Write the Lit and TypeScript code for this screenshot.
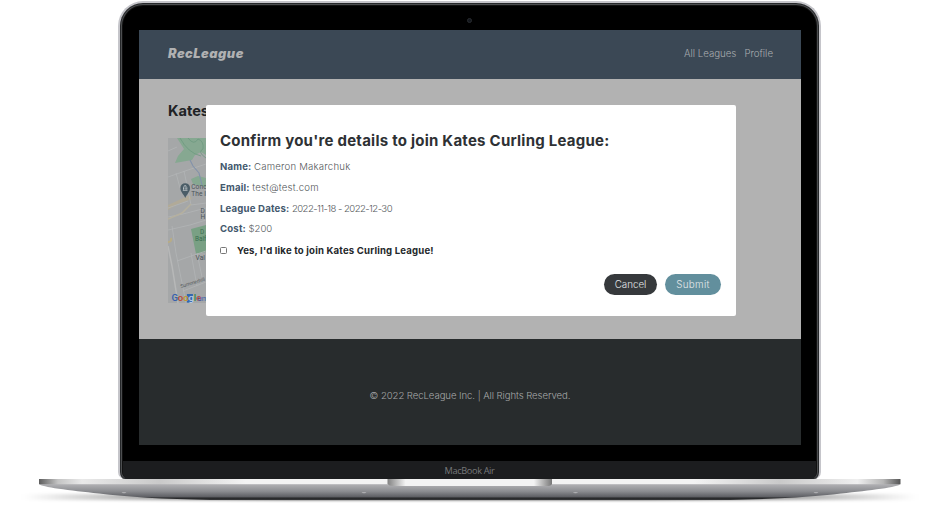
import { LitElement, html, css, svg } from "lit";
import { customElement } from "lit/decorators.js";

@customElement("league-map")
class LeagueMap extends LitElement {
  static styles = css`
    :host { display: block; width: 38px; height: 165px; overflow: hidden; }
    svg { display: block; }
    text { font-family: Roboto, "Liberation Sans", sans-serif; }
    .poi { font-size: 6.6px; fill: #4b5459; letter-spacing: 0.1px; }
    .park { font-size: 6.4px; fill: #3a6e50; }
    .road { font-size: 5px; fill: #555a5d; }
    .brand { font-size: 9.6px; font-weight: 500; letter-spacing: -0.1px; }
    .street { font-size: 7.5px; fill: #3560ad; }
  `;
  render() {
    return html`<svg width="38" height="165" viewBox="0 0 38 165">
      <rect width="38" height="165" fill="#a5a7a8" />
      <path d="M9 0H38V17L33 14L27 17L24 22L7 25L10 18L16 11Z" fill="#86a891" />
      <path d="M23 41L30 38L38 40V49L25 46Z" fill="#86a891" />
      <path d="M23 91L38 87V114L28 116Z" fill="#79a084" />
      <path d="M0 67L22 57L24 61L10 66L0 72Z" fill="#b1aa98" />
      <path d="M0 13L9 9M0 39L20 32L38 26M16 33L20 52L23 67L38 65M0 70L20 63M8 35L12 50M0 92L22 87L38 82M4 88L8 115L18 165M9 123L26 117L38 113M15 153L38 144M23 115L29 148M29 115L35 144M0 79L15 76L38 70" fill="none" stroke="#b3b5b6" stroke-width="0.8" />
      <path d="M0 81L14 75L23 66" fill="none" stroke="#b5b09f" stroke-width="1.5" />
      <path d="M0 108L4 128L10 165" fill="none" stroke="#b7b8b8" stroke-width="1.5" />
      <path d="M0 104Q4 104 3 100" fill="none" stroke="#b8ac85" stroke-width="2" />
      <path d="M12 0Q20 15 33 18M20 0Q26 8 30 1Q36 3 35 11Q29 14 38 20" fill="none" stroke="#6d9b80" stroke-width="0.8" />
      <path d="M22 22L25 28L31 35L34 47" fill="none" stroke="#8292aa" stroke-width="1.1" />
      <path d="M17.3 60C15.5 56 12.4 54 12.4 50A4.8 4.8 0 0 1 22 50C22 54 19 56 17.3 60Z" fill="#4b5d67" />
      <path d="M14.9 48.6L17.1 47L19.3 48.6ZM15 49.3H16V51.7H15ZM16.7 49.3H17.6V51.7H16.7ZM18.3 49.3H19.3V51.7H18.3ZM14.8 52H19.5V52.8H14.8Z" fill="#b9c0c4" />
      <text class="poi" x="23.2" y="51.3">Conc</text>
      <text class="poi" x="23.2" y="57.7">The I</text>
      <text class="poi" x="32.4" y="74.6">D</text>
      <text class="poi" x="32.4" y="81.2">H</text>
      <text class="park" x="32" y="95.8">D</text>
      <text class="park" x="27" y="102.5">Balf</text>
      <text class="poi" x="27.5" y="122.3">Val</text>
      <text class="road" x="13" y="150" transform="rotate(-17 13 150)">Summerhill</text>
      <rect x="18.9" y="156" width="6" height="8.6" fill="#3268ae" />
      <text class="brand" x="3.4" y="163.2"><tspan fill="#3560ad">G</tspan><tspan fill="#b94538">o</tspan><tspan fill="#c39825">o</tspan><tspan fill="#bacbe2">g</tspan><tspan fill="#39884e">l</tspan><tspan fill="#b94538">e</tspan></text>
      <text class="street" x="29.5" y="162.5">um</text>
    </svg>`;
  }
}

@customElement("laptop-base")
class LaptopBase extends LitElement {
  static styles = css`
    :host { display: block; height: 26px; }
    svg { display: block; overflow: visible; }
  `;
  render() {
    return html`<svg width="940" height="26" viewBox="0 479 940 26">
      <defs>
        <linearGradient id="edge">
          <stop offset="0" stop-color="#5d5d5d" />
          <stop offset="0.022" stop-color="#c4c4c4" />
          <stop offset="0.05" stop-color="#e9e9e9" />
          <stop offset="0.14" stop-color="#c9c9c9" />
          <stop offset="0.24" stop-color="#f3f3f3" />
          <stop offset="0.76" stop-color="#f3f3f3" />
          <stop offset="0.86" stop-color="#c9c9c9" />
          <stop offset="0.95" stop-color="#efefef" />
          <stop offset="0.98" stop-color="#b5b5b5" />
          <stop offset="1" stop-color="#555" />
        </linearGradient>
        <linearGradient id="body" x1="0" y1="0" x2="0" y2="1">
          <stop offset="0" stop-color="#b3b3b6" />
          <stop offset="0.45" stop-color="#8c8d91" />
          <stop offset="0.8" stop-color="#5e5f64" />
          <stop offset="0.88" stop-color="#252628" />
          <stop offset="1" stop-color="#38393b" />
        </linearGradient>
        <linearGradient id="notch">
          <stop offset="0" stop-color="#818181" />
          <stop offset="0.11" stop-color="#f3f3f3" />
          <stop offset="0.89" stop-color="#f3f3f3" />
          <stop offset="1" stop-color="#777" />
        </linearGradient>
        <linearGradient id="shade">
          <stop offset="0" stop-color="#000" stop-opacity="0" />
          <stop offset="0.16" stop-color="#000" stop-opacity="0.4" />
          <stop offset="0.3" stop-color="#000" stop-opacity="0.75" />
          <stop offset="0.7" stop-color="#000" stop-opacity="0.75" />
          <stop offset="0.84" stop-color="#000" stop-opacity="0.4" />
          <stop offset="1" stop-color="#000" stop-opacity="0" />
        </linearGradient>
        <filter id="soft" x="-5%" y="-200%" width="110%" height="500%">
          <feGaussianBlur stdDeviation="6 1.6" />
        </filter>
      </defs>
      <rect x="25" y="494" width="890" height="6" fill="url(#shade)" filter="url(#soft)" />
      <path d="M39 484H900.5C899 487 870 490.5 841 493.5Q800 498.5 730 500H210Q140 498.5 99 493.5C70 490.5 41 487 39 484Z" fill="url(#body)" />
      <rect x="39" y="479" width="861.5" height="5.2" fill="url(#edge)" />
      <path d="M387.5 479H552V484Q551 486 547 486H393Q389 486 387.5 484Z" fill="url(#notch)" />
      ${[124, 364, 575.5, 816].map(
        (x) => svg`<ellipse cx=${x} cy="492.6" rx="2.4" ry="0.6" fill="#b0b0b3" />`
      )}
    </svg>`;
  }
}

@customElement("join-dialog")
class JoinDialog extends LitElement {
  static styles = css`
    :host {
      display: block; box-sizing: border-box; width: 530px; height: 211px;
      padding: 26px 15px 20px 14px; background: #fff; border-radius: 2px;
      color: #53575a; font-size: 9.6px; font-weight: 300;
    }
    h2 { margin: 0; font-size: 15px; line-height: 20px; font-weight: 700; color: #2e3134; white-space: nowrap; letter-spacing: 0.24px; }
    .fields { margin: 6.5px 0 0; }
    .field { display: flex; gap: 2.5px; height: 20.75px; line-height: 20.75px; white-space: nowrap; }
    dt { font-weight: 700; color: #43586d; letter-spacing: 0.18px; }
    dd { margin: 0; letter-spacing: 0.22px; }
    .numeric { letter-spacing: -0.55px; }
    .amount { letter-spacing: 0; }
    .check { display: flex; align-items: center; height: 20.75px; gap: 10px; font-weight: 700; color: #25282b; letter-spacing: 0.17px; }
    .box { box-sizing: border-box; width: 7px; height: 7px; border: 1px solid #777; border-radius: 1.5px; }
    .actions { display: flex; justify-content: flex-end; gap: 8px; margin-top: 13px; }
    button {
      height: 21px; padding: 0; border: 0; border-radius: 11px; color: #e4e8e9;
      font: inherit; font-size: 9.8px;
    }
    .cancel { width: 53px; background: #36393c; }
    .submit { width: 56px; background: #628f9d; letter-spacing: 0.3px; }
  `;
  private fields = [
    { label: "Name:", value: "Cameron Makarchuk", kind: "" },
    { label: "Email:", value: "test@test.com", kind: "" },
    { label: "League Dates:", value: "2022-11-18 - 2022-12-30", kind: "numeric" },
    { label: "Cost:", value: "$200", kind: "amount" },
  ];
  render() {
    return html`
      <h2>Confirm you're details to join Kates Curling League:</h2>
      <dl class="fields">
        ${this.fields.map(
          (f) => html`<div class="field"><dt>${f.label}</dt><dd class=${f.kind}>${f.value}</dd></div>`
        )}
      </dl>
      <label class="check"><span class="box"></span><span>Yes, I'd like to join Kates Curling League!</span></label>
      <div class="actions">
        <button class="cancel">Cancel</button>
        <button class="submit">Submit</button>
      </div>
    `;
  }
}

@customElement("app-root")
class AppRoot extends LitElement {
  static styles = css`
    :host {
      display: flex; flex-direction: column; width: 940px; height: 505px; overflow: hidden;
      background: #fff; font-family: Inter, "Open Sans", sans-serif;
    }
    .lid {
      box-sizing: border-box; display: flex; flex-direction: column; width: 703px; height: 478px;
      margin: 1px 0 0 118px; border: 2px solid #c5c5ca; border-bottom: 0;
      border-radius: 25px 25px 7px 7px; background: #000;
      box-shadow: inset 0 0 0 1px #26282a, inset 0 0 0 2px #4c4e50, inset 0 0 0 3px #111; overflow: hidden;
    }
    .camera { display: flex; align-items: center; justify-content: center; height: 27px; }
    .lens { width: 3px; height: 3px; margin-top: 7px; border: 1px solid #292c30; border-radius: 50%; background: #13171d; }
    .screen { position: relative; display: flex; flex-direction: column; width: 662px; height: 415px; margin-left: 19px; background: #b2b2b2; }
    header {
      box-sizing: border-box; display: flex; align-items: center; justify-content: space-between;
      height: 49px; padding: 0 28px 2px 29px; background: #3b4855; color: #a9adb0;
    }
    .logo { font-size: 12.8px; font-weight: 900; font-style: italic; color: #b0b1b2; letter-spacing: 0.5px; }
    nav { display: flex; gap: 8px; font-size: 9.7px; font-weight: 300; }
    main { display: flex; flex-direction: column; height: 260px; padding-left: 29px; }
    h1 { margin: 22px 0 17px; font-size: 14.6px; line-height: 20px; font-weight: 700; color: #202225; white-space: nowrap; }
    footer {
      display: flex; align-items: center; justify-content: center; height: 106px; padding-top: 6px; box-sizing: border-box;
      background: #282c2d; color: #a6a8a8; font-size: 9.6px; font-weight: 300; letter-spacing: -0.07px;
    }
    join-dialog { position: absolute; left: 67px; top: 74.6px; }
    .chin {
      display: flex; align-items: center; justify-content: center; height: 18px; margin: 16px 3px 0;
      border-radius: 0 0 5px 5px; background: #1c1d1f; color: #77787a;
      font: 9.2px "Open Sans", sans-serif; letter-spacing: -0.35px;
    }
  `;
  render() {
    return html`
      <div class="lid">
        <div class="camera"><span class="lens"></span></div>
        <div class="screen">
          <header>
            <span class="logo">RecLeague</span>
            <nav><span>All Leagues</span><span>Profile</span></nav>
          </header>
          <main>
            <h1>Kates</h1>
            <league-map></league-map>
          </main>
          <footer>© 2022 RecLeague Inc. | All Rights Reserved.</footer>
          <join-dialog></join-dialog>
        </div>
        <div class="chin">MacBook Air</div>
      </div>
      <laptop-base></laptop-base>
    `;
  }
}
